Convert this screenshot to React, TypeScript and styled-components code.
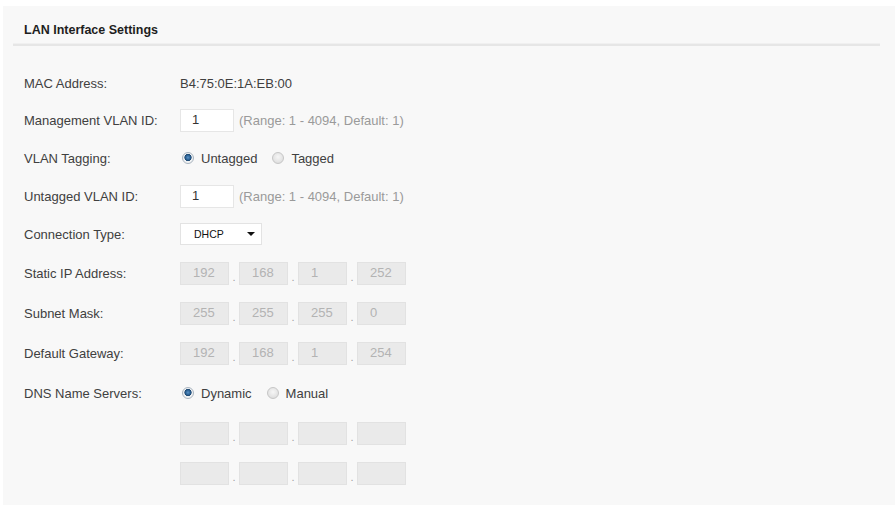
import React from 'react';
import styled, { createGlobalStyle } from 'styled-components';

const GlobalStyle = createGlobalStyle`
  html, body {
    margin: 0;
    padding: 0;
    background: #fff;
  }
  body {
    font-family: 'Liberation Sans', Arial, sans-serif;
    font-size: 13px;
    color: #3a3a3a;
  }
`;

export default function App() {
  return (
    <>
      <GlobalStyle />
      <Panel>
        <Title>LAN Interface Settings</Title>
        <Divider />
        <Form>
          <Row $h={38}>
            <Label>MAC Address:</Label>
            <Value>B4:75:0E:1A:EB:00</Value>
          </Row>
          <Row $h={37}>
            <Label>Management VLAN ID:</Label>
            <TextInput defaultValue="1" />
            <Hint>(Range: 1 - 4094, Default: 1)</Hint>
          </Row>
          <Row $h={38}>
            <Label>VLAN Tagging:</Label>
            <RadioGroup>
              <RadioOption>
                <Radio $checked />
                Untagged
              </RadioOption>
              <RadioOption>
                <Radio />
                Tagged
              </RadioOption>
            </RadioGroup>
          </Row>
          <Row $h={38}>
            <Label>Untagged VLAN ID:</Label>
            <TextInput defaultValue="1" />
            <Hint>(Range: 1 - 4094, Default: 1)</Hint>
          </Row>
          <Row $h={38}>
            <Label>Connection Type:</Label>
            <SelectBox>
              DHCP
              <Arrow />
            </SelectBox>
          </Row>
          <Row $h={40}>
            <Label>Static IP Address:</Label>
            <IpField parts={['192', '168', '1', '252']} />
          </Row>
          <Row $h={40}>
            <Label>Subnet Mask:</Label>
            <IpField parts={['255', '255', '255', '0']} />
          </Row>
          <Row $h={40}>
            <Label>Default Gateway:</Label>
            <IpField parts={['192', '168', '1', '254']} />
          </Row>
          <Row $h={40}>
            <Label>DNS Name Servers:</Label>
            <RadioGroup>
              <RadioOption>
                <Radio $checked />
                Dynamic
              </RadioOption>
              <RadioOption>
                <Radio />
                Manual
              </RadioOption>
            </RadioGroup>
          </Row>
          <Row $h={40}>
            <Label />
            <IpField parts={['', '', '', '']} />
          </Row>
          <Row $h={40}>
            <Label />
            <IpField parts={['', '', '', '']} />
          </Row>
        </Form>
      </Panel>
    </>
  );
}

function IpField({ parts }: { parts: string[] }) {
  return (
    <IpGroup>
      {parts.map((p, i) => (
        <React.Fragment key={i}>
          {i > 0 && <Dot>.</Dot>}
          <IpBox readOnly defaultValue={p} />
        </React.Fragment>
      ))}
    </IpGroup>
  );
}

const Panel = styled.div`
  margin: 6px 0 1px 3px;
  background: #f8f8f8;
  padding-bottom: 12px;
`;

const Title = styled.div`
  padding: 11px 0 0 21px;
  line-height: 26px;
  font-size: 12.5px;
  font-weight: bold;
  color: #1e1e1e;
`;

const Divider = styled.div`
  margin: 0 15px 0 10px;
  border-top: 1px solid #f0f0f0;
  border-bottom: 2px solid #e6e6e6;
`;

const Form = styled.div`
  display: flex;
  flex-direction: column;
  padding: 18px 0 0 21px;
`;

const Row = styled.div<{ $h: number }>`
  display: flex;
  align-items: center;
  height: ${(p) => p.$h}px;
`;

const Label = styled.div`
  width: 156px;
  flex-shrink: 0;
  color: #404040;
`;

const Value = styled.div`
  color: #404040;
`;

const TextInput = styled.input`
  box-sizing: border-box;
  width: 54px;
  height: 23px;
  padding: 0 0 2px 11px;
  border: 1px solid #e6e6e6;
  background: #fff;
  font: 13px 'Liberation Sans', Arial, sans-serif;
  color: #333;
  outline: none;
`;

const Hint = styled.span`
  margin-left: 5px;
  color: #9a9a9a;
`;

const RadioGroup = styled.div`
  display: flex;
  align-items: center;
  gap: 15px;
  margin-left: 2px;
`;

const RadioOption = styled.label`
  display: inline-flex;
  align-items: center;
  gap: 7px;
  color: #404040;
`;

const Radio = styled.span<{ $checked?: boolean }>`
  box-sizing: border-box;
  display: inline-block;
  width: 12px;
  height: 12px;
  border-radius: 50%;
  border: 1px solid ${(p) => (p.$checked ? '#a9b4bf' : '#c6c6c6')};
  background: ${(p) =>
    p.$checked
      ? 'radial-gradient(circle at 50% 45%, #5b93c7 0, #2d6497 2.2px, #1c4670 3.3px, #eef0f2 3.9px, #f7f7f7 100%)'
      : 'radial-gradient(circle at 50% 40%, #f6f6f6 0, #e4e4e4 60%, #d6d6d6 100%)'};
`;

const SelectBox = styled.div`
  box-sizing: border-box;
  display: flex;
  align-items: center;
  justify-content: space-between;
  width: 82px;
  height: 22px;
  padding: 0 6px 0 13px;
  border: 1px solid #e3e3e3;
  background: #fff;
  font-size: 10.5px;
  color: #111;
`;

const Arrow = styled.span`
  width: 0;
  height: 0;
  border-left: 4px solid transparent;
  border-right: 4px solid transparent;
  border-top: 4px solid #111;
`;

const IpGroup = styled.div`
  display: flex;
  align-items: flex-end;
`;

const IpBox = styled.input`
  box-sizing: border-box;
  width: 49px;
  height: 23px;
  padding: 0 0 2px 12px;
  border: 1px solid #e2e2e2;
  background: #eaeaea;
  font: 13px 'Liberation Sans', Arial, sans-serif;
  color: #b3b3b3;
  outline: none;
`;

const Dot = styled.span`
  width: 10px;
  text-align: center;
  font-size: 11px;
  line-height: 11px;
  padding-bottom: 2px;
  color: #a0a0a0;
`;
